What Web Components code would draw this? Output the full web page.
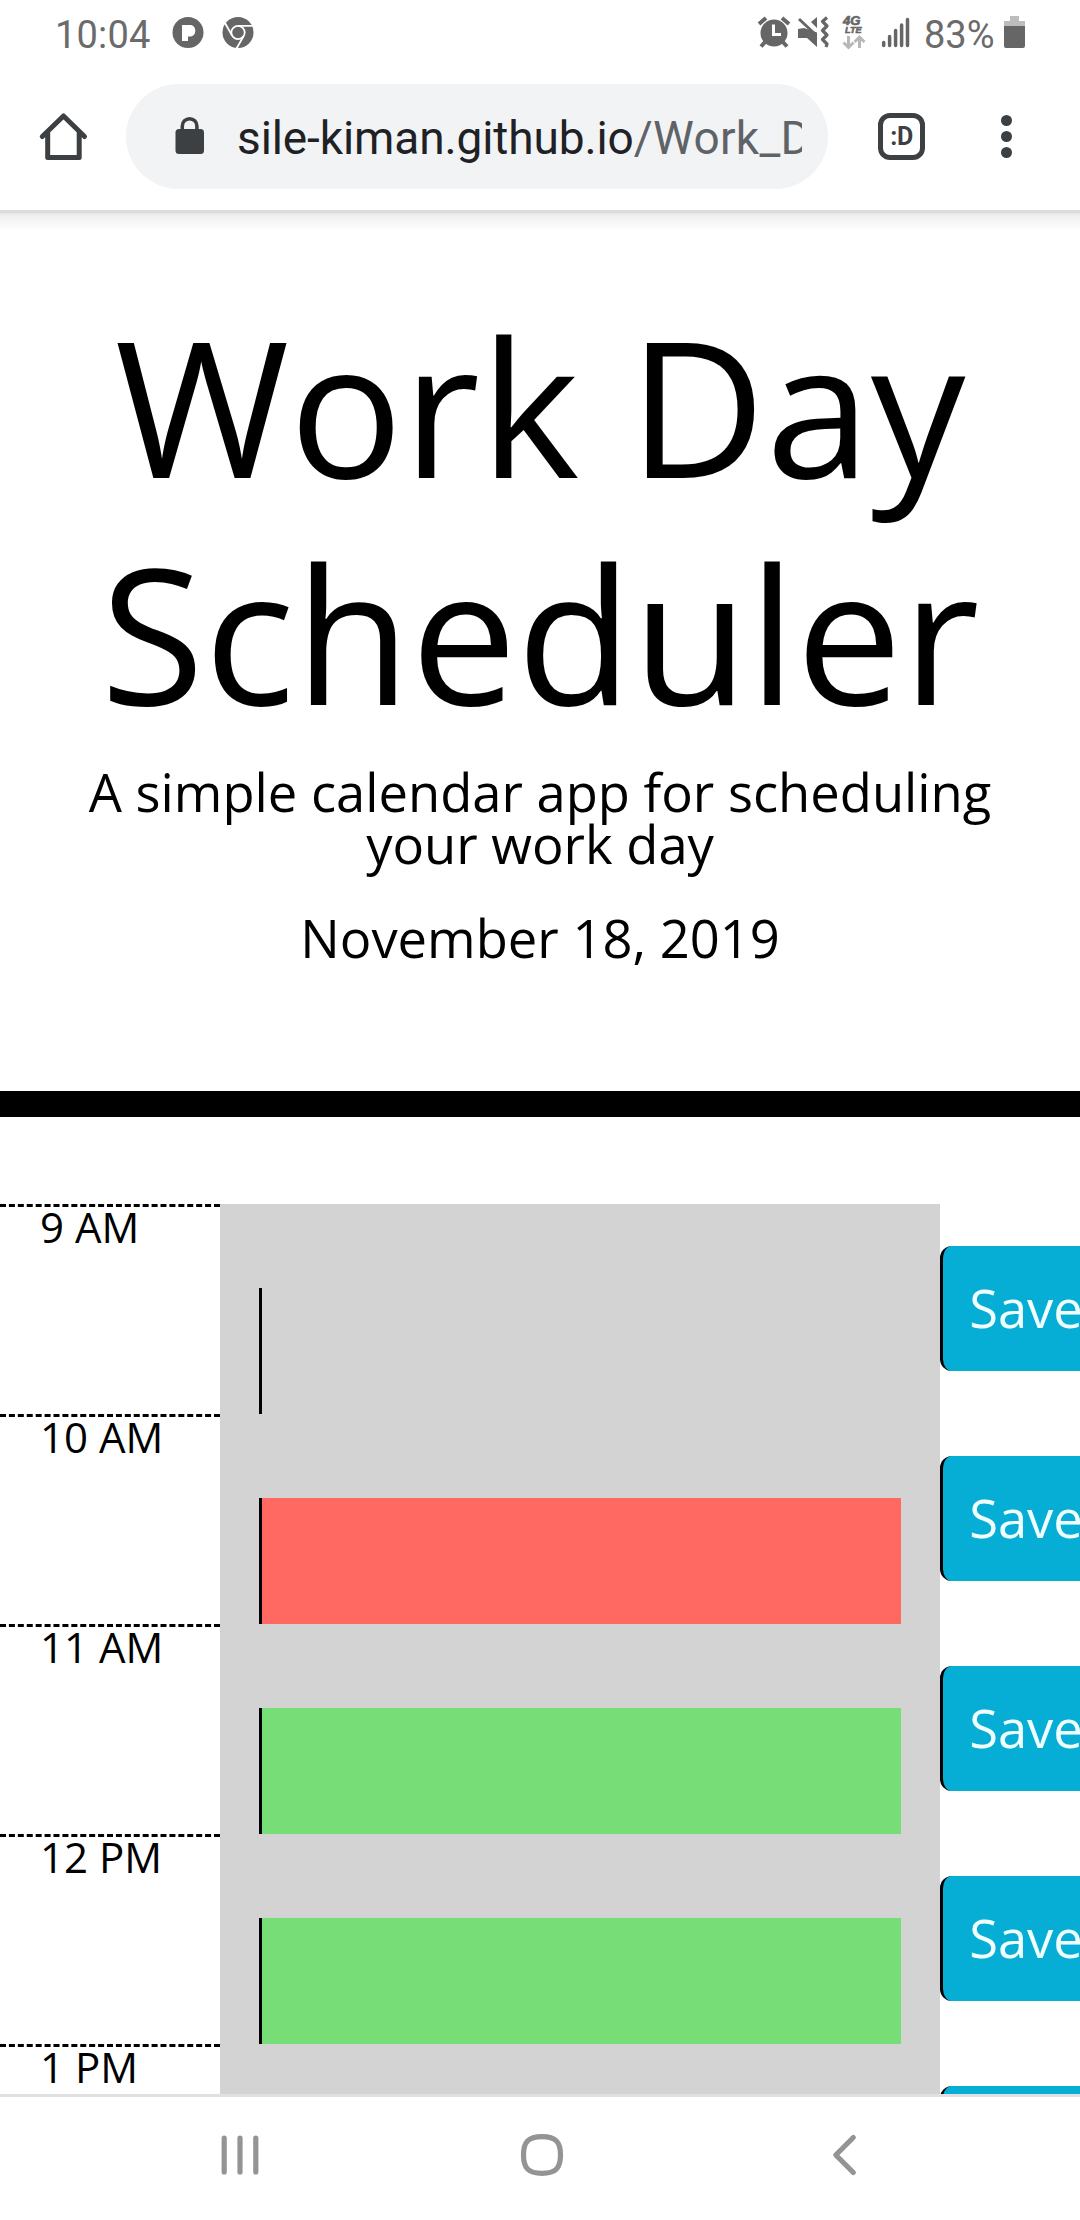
<!DOCTYPE html>
<html lang="en"><head><meta charset="utf-8"><title>Work Day Scheduler</title>
<style>html,body{margin:0;background:#fff}body{width:1080px;height:2220px;overflow:hidden}</style></head>
<body><phone-screen></phone-screen>
<script>
const define=(name,html)=>customElements.define(name,class extends HTMLElement{
  constructor(){super();this.attachShadow({mode:'open'}).innerHTML=html;}
});
define('status-bar',`<style>
:host{display:flex;height:68px;box-sizing:border-box;padding:0 54px 0 55px;justify-content:space-between;font:400 38px/71px Roboto,sans-serif;color:#6b6b6b}
div{display:flex;align-items:flex-start}svg{display:block;flex:none}
.t{width:117px;letter-spacing:.2px}.b{width:78px}
</style>
<div><span class="t">10:04</span>
<svg width="84" height="68" viewBox="172 0 84 68"><circle cx="188" cy="32.500" r="15.500" fill="#666"/><path d="M182 25h9a6 6 0 0 1 0 11.500h-3V41h-6z" fill="#fff"/>
<circle cx="238" cy="32.500" r="15.500" fill="#666"/><g fill="none" stroke="#fff" stroke-width="1.800"><circle cx="238" cy="32.500" r="6.700"/><path d="M238 25.800h15M232.200 35.900L225 23M243.800 35.900L236.500 48.500"/></g></svg></div>
<div><svg width="165" height="68" viewBox="756 0 165 68"><g fill="#666" stroke="#666">
<circle cx="774" cy="33" r="13.500" stroke="none"/><path stroke-width="4" d="M759 24l7-6M789 24l-7-6M766 41l-5 5.500M782 41l5 5.500"/></g><path d="M773.500 24.500v10h7.500" fill="none" stroke="#fff" stroke-width="3"/>
<path d="M798 29l6-1 13 4.500V47l-10-9h-9zM811 22l6-5v11z" fill="#666"/><path d="M799 19l17 16" stroke="#666" stroke-width="3"/><path d="M827 17.500l-4.500 4 4.500 4.500-4.500 4.500 4.500 4.500-4.500 4.500 4.500 4.500-1 3" fill="none" stroke="#666" stroke-width="3.200" stroke-linejoin="round"/>
<g font-family="Liberation Sans" font-weight="700" font-style="italic" fill="#666" stroke="#666" stroke-width=".6"><text x="843" y="25.200" font-size="12.500" textLength="17.500" lengthAdjust="spacingAndGlyphs">4G</text><text x="845" y="33.200" font-size="9.500" textLength="16.500" lengthAdjust="spacingAndGlyphs">LTE</text></g>
<path d="M848.500 36v11M843.500 42.500l5 5 5-5M859.500 48V37M854.500 42l5-5 5 5" fill="none" stroke="#b8b8b8" stroke-width="3"/>
<path d="M883.700 42.500v3M889.600 36.500v9M895.600 30.500v15M901.600 25v20.500M907.500 19.500v26" stroke="#666" stroke-width="3.500" stroke-linecap="round"/></svg>
<svg width="3" height="68"></svg><span class="b">83%</span><svg style="margin-left:2px" width="22" height="68" viewBox="1004 0 22 68"><path d="M1010 16h9v5h6v6h-21v-6h6z" fill="#bdbdbd"/><path d="M1004 26h21v20a2 2 0 0 1-2 2h-17a2 2 0 0 1-2-2z" fill="#666"/></svg></div>`);
define('browser-bar',`<style>
:host{display:flex;height:142px;padding-top:16px;box-sizing:border-box;background:#fff;font-family:Roboto,sans-serif}
svg{display:block;flex:none}
.p{width:702px;height:105px;border-radius:53px;background:#f1f3f4;display:flex;align-items:center}
.u{width:565px;padding-top:2px;overflow:hidden;white-space:nowrap;font-size:46px;line-height:70px;letter-spacing:-.1px;color:#202124}.u span{color:#5f6368;letter-spacing:.3px}
.tab{margin:29px 0 0 50px;width:47px;height:47px;box-sizing:border-box;border:5px solid #3c4043;border-radius:12px;font:700 25px/37px Roboto,sans-serif;text-align:center;color:#3c4043;letter-spacing:-.5px}
</style>
<svg width="126" height="105" viewBox="0 84 126 105"><path d="M42.300 136.500L63.500 116l21 20.500M47.700 133v24.500h31.500V133" fill="none" stroke="#3c4043" stroke-width="5" stroke-linecap="round" stroke-linejoin="round"/></svg>
<div class="p"><svg width="111" height="105" viewBox="126 84 111 105"><rect x="175.500" y="129" width="28.500" height="25" rx="3.500" fill="#3c4043"/><path d="M182.300 131v-5a7.300 7.300 0 0 1 14.600 0v5" fill="none" stroke="#3c4043" stroke-width="3.500"/></svg><div class="u">sile-kiman.github.io<span>/Work_Day</span></div></div>
<div class="tab">:D</div>
<svg width="155" height="105" viewBox="925 84 155 105" fill="#3c4043"><circle cx="1006.500" cy="120.500" r="5.500"/><circle cx="1006.500" cy="136.500" r="5.500"/><circle cx="1006.500" cy="152.500" r="5.500"/></svg>`);
define('page-header',`<style>
:host{display:flex;flex-direction:column;height:907px;box-sizing:border-box;border-bottom:26px solid #000;text-align:center;color:#000;background:linear-gradient(#dcdcdc 0,#dcdcdc 3px,#ededed 4px,#fff 20px)}
h1,p{font-weight:400;margin:0}h1{margin-top:82px;font-size:189px;line-height:226.800px}
p{font-size:52.500px;line-height:52.500px}.l{margin-top:20px}.d{margin-top:41px}
</style><h1>Work Day<br>Scheduler</h1><p class="l">A simple calendar app for scheduling<br>your work day</p><p class="d">November 18, 2019</p>`);
define('time-block',`<style>
:host{display:flex;height:210px;width:1130px}
.h{width:220px;box-sizing:border-box;border-top:3px dashed #000;padding-left:40px;font-size:42px;line-height:39px}
.c{width:721px;box-sizing:border-box;padding:84px 39px 0;background:#d3d3d3}
.e{height:126px;box-sizing:border-box;border-left:3px solid #000;background:var(--slot,#d3d3d3)}
button{margin:42px 0 0;width:190px;height:125px;padding:0 0 2px 26px;text-align:left;border:0;border-left:3px solid #000;border-radius:12px;background:#06aed5;color:azure;font:52.500px 'Open Sans',sans-serif}
</style><div class="h"><slot></slot></div><div class="c"><div class="e"></div></div><button>Save</button>`);
define('nav-bar',`<style>
:host{display:block;height:126px;box-sizing:border-box;border-top:3px solid #e0e0e0;background:#fff}svg{display:block}
</style><svg width="1080" height="123" viewBox="0 2097 1080 123" fill="none" stroke="#949494" stroke-width="5.200" stroke-linecap="round" stroke-linejoin="round"><path d="M224.200 2138v34M240 2138v34M255.800 2138v34"/><path d="M542 2136.700c14 0 18.500 5.500 18.500 18.300s-4.500 18.300-18.500 18.300-18.500-5.500-18.500-18.300 4.500-18.300 18.500-18.300z"/><path d="M853.300 2137.500l-17.500 17.500 17.500 17.500"/></svg>`);
define('phone-screen',`<style>
:host{display:flex;flex-direction:column;width:1080px;height:2220px;overflow:hidden;background:#fff;font-family:'Open Sans',sans-serif;color:#000}
main{height:977px;padding-top:87px;box-sizing:border-box;overflow:hidden}
</style><status-bar></status-bar><browser-bar></browser-bar><page-header></page-header>
<main><time-block>9 AM</time-block><time-block style="--slot:#ff6961">10 AM</time-block><time-block style="--slot:#77dd77">11 AM</time-block><time-block style="--slot:#77dd77">12 PM</time-block><time-block>1 PM</time-block></main><nav-bar></nav-bar>`);
</script></body></html>
